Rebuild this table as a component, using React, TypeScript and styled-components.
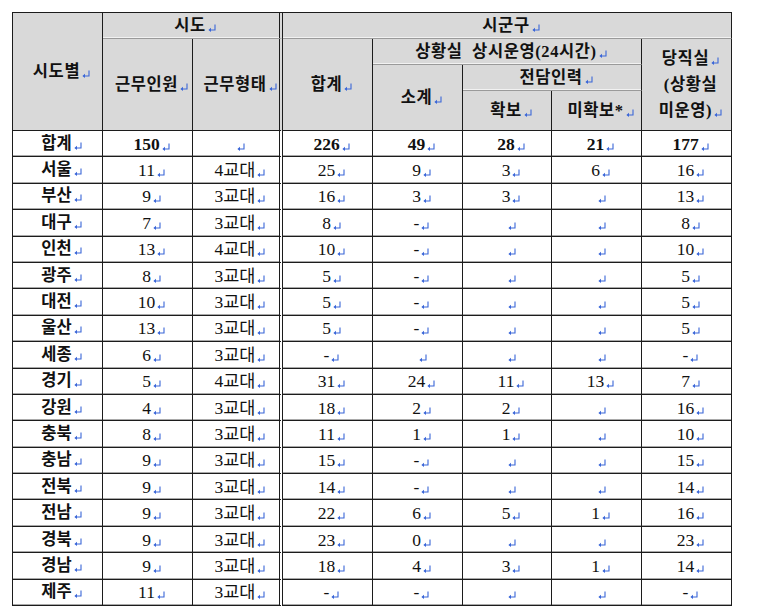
import React from "react";
import styled, { createGlobalStyle } from "styled-components";

const Global = createGlobalStyle`
  *, *::before, *::after { box-sizing: border-box; }
  html, body { margin: 0; padding: 0; background: #ffffff; }
`;

const Page = styled.div`
  padding: 12px 0 0 12px;
`;

const Table = styled.table`
  border-collapse: separate;
  border-spacing: 0;
  table-layout: fixed;
  width: 720px;
  border-top: 1px solid #1c1c1c;
  border-left: 1px solid #1c1c1c;
  font-family: "Liberation Serif", "Noto Sans CJK KR", serif;
  color: #111111;
`;

const Row = styled.tr<{ $h: number }>`
  height: ${(p) => p.$h}px;
`;

const Cell = styled.td<{
  $head?: boolean;
  $bold?: boolean;
  $dbl?: boolean;
  $soft?: boolean;
  $data?: boolean;
  $size?: number;
}>`
  padding: 0 0 0 8px;
  text-align: center;
  vertical-align: middle;
  white-space: pre;
  overflow: hidden;
  background: ${(p) => (p.$head ? "#d9d9d9" : "#ffffff")};
  font-size: ${(p) => p.$size ?? 16.5}px;
  letter-spacing: ${(p) => (p.$head ? "0.6px" : "0")};
  font-weight: ${(p) => (p.$bold ? 700 : 400)};
  line-height: 20px;
  border-right: ${(p) => (p.$dbl ? "4px double #1c1c1c" : "1px solid #1c1c1c")};
  border-bottom: 1px solid ${(p) => (p.$soft ? "#9a9a9a" : "#1c1c1c")};
  box-shadow: ${(p) =>
    p.$data ? "inset 0 -1px 0 #a9a9a9" : p.$soft ? "inset 0 -1px 0 #f2f2f2" : "none"};
`;

const Stack = styled.div`
  line-height: 26px;
`;

const RetIcon = styled.svg`
  width: 8px;
  height: 8px;
  margin-left: 2px;
  vertical-align: -1px;
`;

const Ret = () => (
  <RetIcon viewBox="0 0 8 8">
    <path d="M7 0.5 V6 H1.5" fill="none" stroke="#3a66d8" strokeWidth="1.1" />
    <path d="M0.4 6 L3 3.8 L3 8 Z" fill="#3a66d8" />
  </RetIcon>
);

const V = ({ t }: { t: string }) => (
  <>
    {t}
    <Ret />
  </>
);

type RowData = [string, string, string, string, string, string, string, string];

const rows: RowData[] = [
  ["서울", "11", "4교대", "25", "9", "3", "6", "16"],
  ["부산", "9", "3교대", "16", "3", "3", "", "13"],
  ["대구", "7", "3교대", "8", "-", "", "", "8"],
  ["인천", "13", "4교대", "10", "-", "", "", "10"],
  ["광주", "8", "3교대", "5", "-", "", "", "5"],
  ["대전", "10", "3교대", "5", "-", "", "", "5"],
  ["울산", "13", "3교대", "5", "-", "", "", "5"],
  ["세종", "6", "3교대", "-", "", "", "", "-"],
  ["경기", "5", "4교대", "31", "24", "11", "13", "7"],
  ["강원", "4", "3교대", "18", "2", "2", "", "16"],
  ["충북", "8", "3교대", "11", "1", "1", "", "10"],
  ["충남", "9", "3교대", "15", "-", "", "", "15"],
  ["전북", "9", "3교대", "14", "-", "", "", "14"],
  ["전남", "9", "3교대", "22", "6", "5", "1", "16"],
  ["경북", "9", "3교대", "23", "0", "", "", "23"],
  ["경남", "9", "3교대", "18", "4", "3", "1", "14"],
  ["제주", "11", "3교대", "-", "-", "", "", "-"],
];

const total: RowData = ["합계", "150", "", "226", "49", "28", "21", "177"];

const widths = [90, 90, 90, 90, 90, 89, 90, 90];

const DataRow = ({ r, bold }: { r: RowData; bold?: boolean }) => (
  <Row $h={26.4}>
    {r.map((v, i) => (
      <Cell
        key={i}
        $data
        $bold={bold || i === 0}
        $dbl={i === 2}
        $size={i === 0 ? 16.5 : 17.5}
      >
        <V t={v} />
      </Cell>
    ))}
  </Row>
);

export default function App() {
  return (
    <Page>
      <Global />
      <Table>
        <colgroup>
          {widths.map((w, i) => (
            <col key={i} style={{ width: w }} />
          ))}
        </colgroup>
        <thead>
          <Row $h={26}>
            <Cell $head $bold rowSpan={4}>
              <V t="시도별" />
            </Cell>
            <Cell $head $bold $soft $dbl colSpan={2}>
              <V t="시도" />
            </Cell>
            <Cell $head $bold $soft colSpan={5}>
              <V t="시군구" />
            </Cell>
          </Row>
          <Row $h={26}>
            <Cell $head $bold rowSpan={3}>
              <V t="근무인원" />
            </Cell>
            <Cell $head $bold $dbl rowSpan={3}>
              <V t="근무형태" />
            </Cell>
            <Cell $head $bold rowSpan={3}>
              <V t="합계" />
            </Cell>
            <Cell $head $bold $soft colSpan={3}>
              <V t="상황실  상시운영(24시간)" />
            </Cell>
            <Cell $head $bold rowSpan={3}>
              <Stack>
                <V t="당직실" />
                <br />
                (상황실
                <br />
                <V t="미운영)" />
              </Stack>
            </Cell>
          </Row>
          <Row $h={26}>
            <Cell $head $bold rowSpan={2}>
              <V t="소계" />
            </Cell>
            <Cell $head $bold $soft colSpan={2}>
              <V t="전담인력" />
            </Cell>
          </Row>
          <Row $h={40}>
            <Cell $head $bold>
              <V t="확보" />
            </Cell>
            <Cell $head $bold>
              <V t="미확보*" />
            </Cell>
          </Row>
        </thead>
        <tbody>
          <DataRow r={total} bold />
          {rows.map((r) => (
            <DataRow key={r[0]} r={r} />
          ))}
        </tbody>
      </Table>
    </Page>
  );
}
